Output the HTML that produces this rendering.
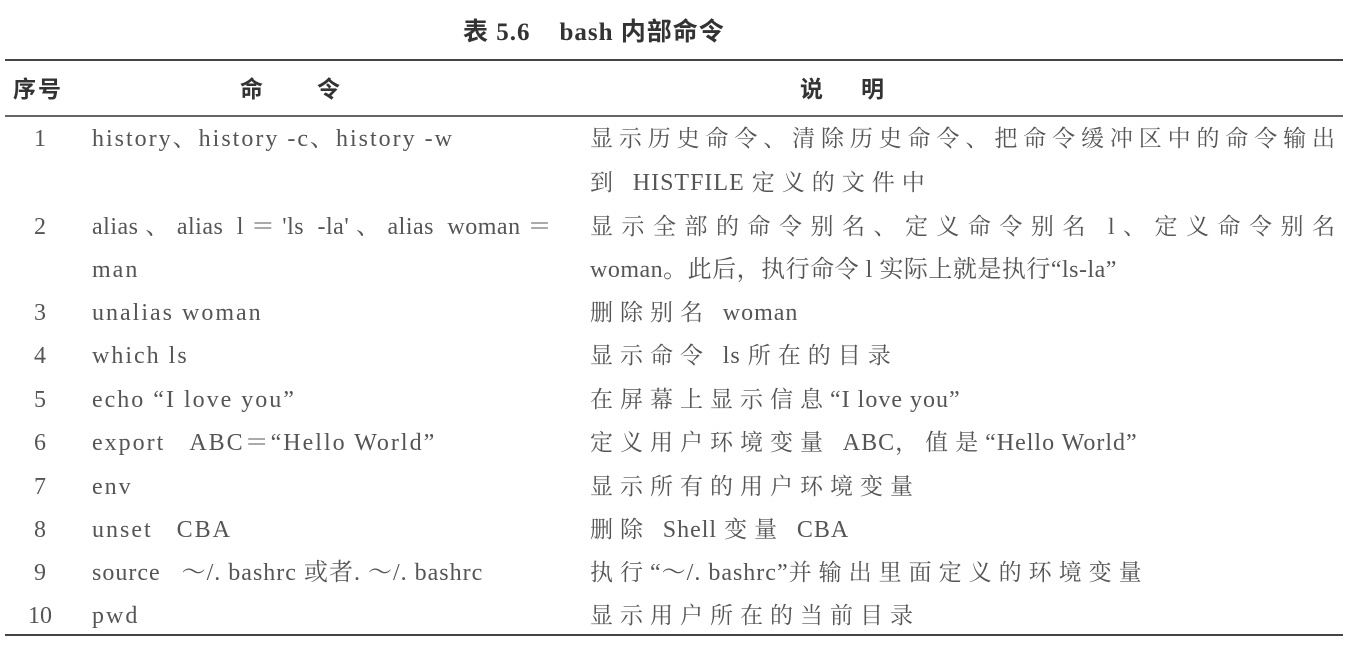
<!DOCTYPE html>
<html><head><meta charset="utf-8"><style>
body{margin:0;width:1353px;height:646px;background:#fff;position:relative;overflow:hidden;font-family:"Liberation Serif","Noto Serif CJK SC",serif;color:#555;}
.r{position:absolute;height:2px;background:#444;left:5px;width:1338px}
.t{position:absolute;white-space:nowrap;font-size:24px;line-height:30px;transform:translateY(-15px)}
.n{left:26px;width:28px;text-align:center}
.c{left:92px;letter-spacing:2px}
.d{left:590px;letter-spacing:1px}
.k{letter-spacing:7px;font-size:23px}
.j{left:590px;width:745px;text-align:justify;text-align-last:justify;letter-spacing:0}
.h{font-family:"Liberation Sans","Noto Sans CJK SC",sans-serif;font-weight:bold;color:#333;font-size:23px}
</style></head><body>
<div class="t h" style="left:463px;top:33px;font-size:25px;letter-spacing:1px;font-family:'Liberation Serif','Noto Sans CJK SC',serif">表 5.6&nbsp;&nbsp;&nbsp;&nbsp;bash 内部命令</div>
<div class="r" style="top:59px"></div>
<div class="r" style="top:115px;height:1.5px;background:#666"></div>
<div class="r" style="top:634px"></div>
<div class="t h" style="left:13px;top:89px;letter-spacing:2px">序号</div>
<div class="t h" style="left:240px;top:89px;letter-spacing:54px">命令</div>
<div class="t h" style="left:800px;top:89px;letter-spacing:38px">说明</div>

<div class="t n" style="top:139px">1</div><div class="t c" style="top:139px">history、history -c、history -w</div>
<div class="t j" style="top:139px;font-size:23px">显示历史命令、清除历史命令、把命令缓冲区中的命令输出</div>
<div class="t d" style="top:183px"><span class="k">到 </span>HISTFILE <span class="k">定义的文件中</span></div>

<div class="t n" style="top:227px">2</div><div class="t c" style="top:227px;width:460px;text-align:justify;text-align-last:justify;letter-spacing:0.5px">alias、alias l＝'ls -la'、alias woman＝</div>
<div class="t j" style="top:227px;font-size:23px">显示全部的命令别名、定义命令别名 l、定义命令别名</div>
<div class="t c" style="top:270px">man</div>
<div class="t d" style="top:270px;letter-spacing:0.5px">woman。此后，执行命令 l 实际上就是执行“ls-la”</div>

<div class="t n" style="top:313px">3</div><div class="t c" style="top:313px">unalias woman</div><div class="t d" style="top:313px"><span class="k">删除别名 </span>woman</div>
<div class="t n" style="top:356px">4</div><div class="t c" style="top:356px">which ls</div><div class="t d" style="top:356px"><span class="k">显示命令 </span>ls <span class="k">所在的目录</span></div>
<div class="t n" style="top:400px">5</div><div class="t c" style="top:400px">echo “I love you”</div><div class="t d" style="top:400px"><span class="k">在屏幕上显示信息</span>“I love you”</div>
<div class="t n" style="top:443px">6</div><div class="t c" style="top:443px">export&nbsp;&nbsp;&nbsp;ABC＝“Hello World”</div><div class="t d" style="top:443px"><span class="k">定义用户环境变量 </span>ABC<span class="k">，值是</span>“Hello World”</div>
<div class="t n" style="top:487px">7</div><div class="t c" style="top:487px">env</div><div class="t d" style="top:487px"><span class="k">显示所有的用户环境变量</span></div>
<div class="t n" style="top:530px">8</div><div class="t c" style="top:530px">unset&nbsp;&nbsp;&nbsp;CBA</div><div class="t d" style="top:530px"><span class="k">删除 </span>Shell <span class="k">变量 </span>CBA</div>
<div class="t n" style="top:573px">9</div><div class="t c" style="top:573px;letter-spacing:1px">source&nbsp;&nbsp;&nbsp;～/. bashrc 或者. ～/. bashrc</div><div class="t d" style="top:573px"><span class="k">执行</span>“～/. bashrc”<span class="k">并输出里面定义的环境变量</span></div>
<div class="t n" style="top:616px">10</div><div class="t c" style="top:616px">pwd</div><div class="t d" style="top:616px"><span class="k">显示用户所在的当前目录</span></div>
</body></html>
